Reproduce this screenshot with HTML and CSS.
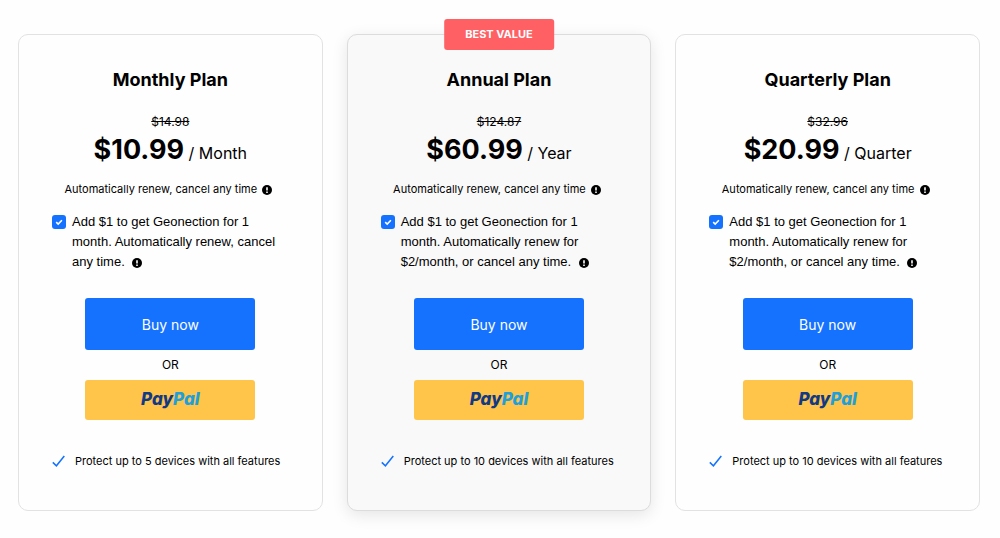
FILE: index.html
```
<!DOCTYPE html>
<html lang="en">
<head>
    <meta charset="UTF-8">
    <meta name="viewport" content="width=device-width, initial-scale=1.0">
    <title>Pricing Plans</title>
    <link rel="stylesheet" href="styles.css">
</head>
<body>
    <!-- shared icons -->
    <svg class="icon-defs" width="0" height="0" aria-hidden="true">
        <symbol id="icon-info" viewBox="0 0 10 10">
            <circle cx="5" cy="5" r="5" fill="#000"/>
            <path d="M4.2 2.2h1.6v3.2H4.2zM4.2 6.4h1.6v1.5H4.2z" fill="#fff"/>
        </symbol>
        <symbol id="icon-check" viewBox="0 0 13 12">
            <path d="M.8 7.4 4.4 10.8 12.3 1" fill="none" stroke="#1472ff" stroke-width="1.5"/>
        </symbol>
    </svg>

    <main class="plans">
        <section class="plan">
            <h2>Monthly Plan</h2>
            <del class="old-price">$14.98</del>
            <p class="price"><strong>$10.99</strong> / Month</p>
            <p class="renew">Automatically renew, cancel any time <svg class="info"><use href="#icon-info"/></svg></p>
            <div class="addon">
                <input type="checkbox" id="addon-monthly" checked>
                <label for="addon-monthly">Add $1 to get Geonection for 1 month. Automatically renew, cancel any time. <svg class="info"><use href="#icon-info"/></svg></label>
            </div>
            <button type="button" class="btn btn-buy">Buy now</button>
            <p class="or">OR</p>
            <button type="button" class="btn btn-paypal"><span class="pay">Pay</span><span class="pal">Pal</span></button>
            <ul class="features">
                <li><svg class="check"><use href="#icon-check"/></svg>Protect up to 5 devices with all features</li>
            </ul>
        </section>

        <section class="plan plan-best">
            <span class="badge">BEST VALUE</span>
            <h2>Annual Plan</h2>
            <del class="old-price">$124.87</del>
            <p class="price"><strong>$60.99</strong> / Year</p>
            <p class="renew">Automatically renew, cancel any time <svg class="info"><use href="#icon-info"/></svg></p>
            <div class="addon">
                <input type="checkbox" id="addon-annual" checked>
                <label for="addon-annual">Add $1 to get Geonection for 1 month. Automatically renew for $2/month, or cancel any time. <svg class="info"><use href="#icon-info"/></svg></label>
            </div>
            <button type="button" class="btn btn-buy">Buy now</button>
            <p class="or">OR</p>
            <button type="button" class="btn btn-paypal"><span class="pay">Pay</span><span class="pal">Pal</span></button>
            <ul class="features">
                <li><svg class="check"><use href="#icon-check"/></svg>Protect up to 10 devices with all features</li>
            </ul>
        </section>

        <section class="plan">
            <h2>Quarterly Plan</h2>
            <del class="old-price">$32.96</del>
            <p class="price"><strong>$20.99</strong> / Quarter</p>
            <p class="renew">Automatically renew, cancel any time <svg class="info"><use href="#icon-info"/></svg></p>
            <div class="addon">
                <input type="checkbox" id="addon-quarterly" checked>
                <label for="addon-quarterly">Add $1 to get Geonection for 1 month. Automatically renew for $2/month, or cancel any time. <svg class="info"><use href="#icon-info"/></svg></label>
            </div>
            <button type="button" class="btn btn-buy">Buy now</button>
            <p class="or">OR</p>
            <button type="button" class="btn btn-paypal"><span class="pay">Pay</span><span class="pal">Pal</span></button>
            <ul class="features">
                <li><svg class="check"><use href="#icon-check"/></svg>Protect up to 10 devices with all features</li>
            </ul>
        </section>
    </main>
</body>
</html>
```
FILE: styles.css
```
* {
    box-sizing: border-box;
}
body {
    margin: 0;
    background: #fefefe;
    color: #000;
    font-family: Inter, "Liberation Sans", Arial, sans-serif;
}
h2, p, ul {
    margin: 0;
    padding: 0;
}
.icon-defs {
    display: block;
}
.plans {
    display: grid;
    grid-template-columns: repeat(3, 1fr);
    gap: 24px;
    padding: 34px 20px 28px 18px;
}
.plan {
    position: relative;
    display: flex;
    flex-direction: column;
    align-items: center;
    padding: 32px 33px 39px;
    border: 1px solid #e2e2e2;
    border-radius: 10px;
}
.plan-best {
    background: #f9f9f9;
    border-color: #dcdcdc;
    box-shadow: 0 4px 16px rgba(0,0,0,0.1);
}
.badge {
    position: absolute;
    top: -16px;
    left: 50%;
    transform: translateX(-50%);
    padding: 0 21px;
    border-radius: 3px;
    background: #ff6064;
    color: #fff;
    font-size: 11px;
    font-weight: 700;
    line-height: 31px;
    white-space: nowrap;
}
.plan h2 {
    font-size: 18px;
    font-weight: 700;
    line-height: 26px;
}
.old-price {
    margin-top: 21px;
    font-size: 12px;
    line-height: 16px;
}
.price {
    font-size: 16px;
    line-height: 40px;
}
.price strong {
    font-size: 27px;
    font-weight: 700;
}
.renew {
    margin-top: 8px;
    font-size: 11px;
    line-height: 16px;
}
.info {
    width: 10px;
    height: 10px;
    margin-left: 2px;
    margin-right: 4px;
    vertical-align: -2px;
}
.addon {
    display: flex;
    align-self: stretch;
    gap: 6px;
    margin-top: 15px;
}
.addon input {
    appearance: none;
    flex: none;
    width: 14px;
    height: 14px;
    margin: 3px 0;
    border-radius: 3px;
    background: #1472ff url("data:image/svg+xml,%3Csvg xmlns='http://www.w3.org/2000/svg' viewBox='0 0 14 14'%3E%3Cpath d='M4.2 7.2 6.2 9.1 9.9 5.3' fill='none' stroke='white' stroke-width='1.6'/%3E%3C/svg%3E");
}
.addon input:not(:checked) {
    background: #fff;
    border: 1px solid #999;
}
.addon label {
    font-family: "Liberation Sans", Arial, sans-serif;
    font-size: 13px;
    line-height: 20px;
}
.addon .info {
    margin-left: 4px;
    margin-right: 0;
}
.btn {
    width: 170px;
    border: none;
    border-radius: 3px;
    font-family: inherit;
    cursor: pointer;
}
.btn-buy {
    height: 52px;
    margin-top: 26px;
    background: #1472ff;
    color: #fff;
    font-size: 14px;
}
.or {
    font-size: 12px;
    line-height: 30px;
}
.btn-paypal {
    height: 40px;
    padding-bottom: 4px;
    background: #ffc44a;
    font-size: 17px;
    font-style: italic;
    font-weight: 800;
}
.pay {
    color: #123984;
}
.pal {
    color: #219fdb;
}
.features {
    align-self: stretch;
    margin-top: 31px;
    list-style: none;
}
.features li {
    display: flex;
    align-items: center;
    gap: 10px;
    font-size: 11px;
    line-height: 20px;
}
.check {
    width: 13px;
    height: 12px;
}
```
